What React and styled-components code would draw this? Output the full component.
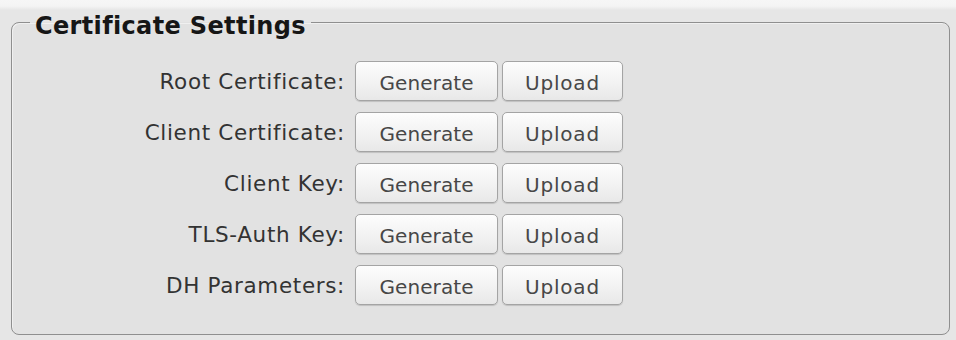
import styled, { createGlobalStyle } from "styled-components"

const GlobalStyle = createGlobalStyle`
    html, body {
        margin: 0;
        padding: 0;
        background: #ebebeb;
    }
    body {
        font-family: "DejaVu Sans", Verdana, sans-serif;
    }
`

const Page = styled.div`
    width: 956px;
    height: 340px;
    box-sizing: border-box;
    padding: 5px 6px 0 11px;
    background: linear-gradient(#f6f6f6 0px, #f4f4f4 6px, #e6e6e6 10px, #e6e6e6 100%);
`

const Fieldset = styled.fieldset`
    margin: 0;
    height: 330px;
    box-sizing: border-box;
    padding: 22px 0 0 0;
    border: 1.5px solid #8f8f8f;
    border-radius: 8px;
    background: #e2e2e2;
    box-shadow: 1px 1px 0 #f0f0f0 inset;
`

const Legend = styled.legend`
    margin-left: 18px;
    padding: 8px 5px 0 5px;
    font-size: 24px;
    line-height: 26px;
    font-weight: bold;
    color: #161616;
    letter-spacing: 0.35px;
`

const Grid = styled.div`
    display: grid;
    grid-template-columns: 339px 143px 121px;
    column-gap: 4px;
    row-gap: 11px;
    align-items: center;
`

const Label = styled.span`
    justify-self: end;
    margin-right: 6px;
    font-size: 21.5px;
    letter-spacing: 0.65px;
    color: #333333;
    white-space: nowrap;
`

const Button = styled.button`
    height: 40px;
    box-sizing: border-box;
    margin: 0;
    padding: 4px 0 0 0;
    border: 1px solid #a4a4a4;
    border-radius: 5px;
    background: linear-gradient(#fdfdfd, #f1f1f1 60%, #e8e8e8);
    box-shadow: 0 1px 1px rgba(0, 0, 0, 0.15);
    font-family: "DejaVu Sans", Verdana, sans-serif;
    font-size: 20px;
    letter-spacing: ${({ $wide }) => ($wide ? "0.8px" : "0.1px")};
    color: #474747;
    cursor: pointer;
`

const rows = [
    "Root Certificate:",
    "Client Certificate:",
    "Client Key:",
    "TLS-Auth Key:",
    "DH Parameters:",
]

export default function App() {
    return (
        <>
            <GlobalStyle />
            <Page>
                <Fieldset>
                    <Legend>Certificate Settings</Legend>
                    <Grid>
                        {rows.map((label) => (
                            <Row key={label} label={label} />
                        ))}
                    </Grid>
                </Fieldset>
            </Page>
        </>
    )
}

const Row = ({ label }) => (
    <>
        <Label>{label}</Label>
        <Button>Generate</Button>
        <Button $wide>Upload</Button>
    </>
)
